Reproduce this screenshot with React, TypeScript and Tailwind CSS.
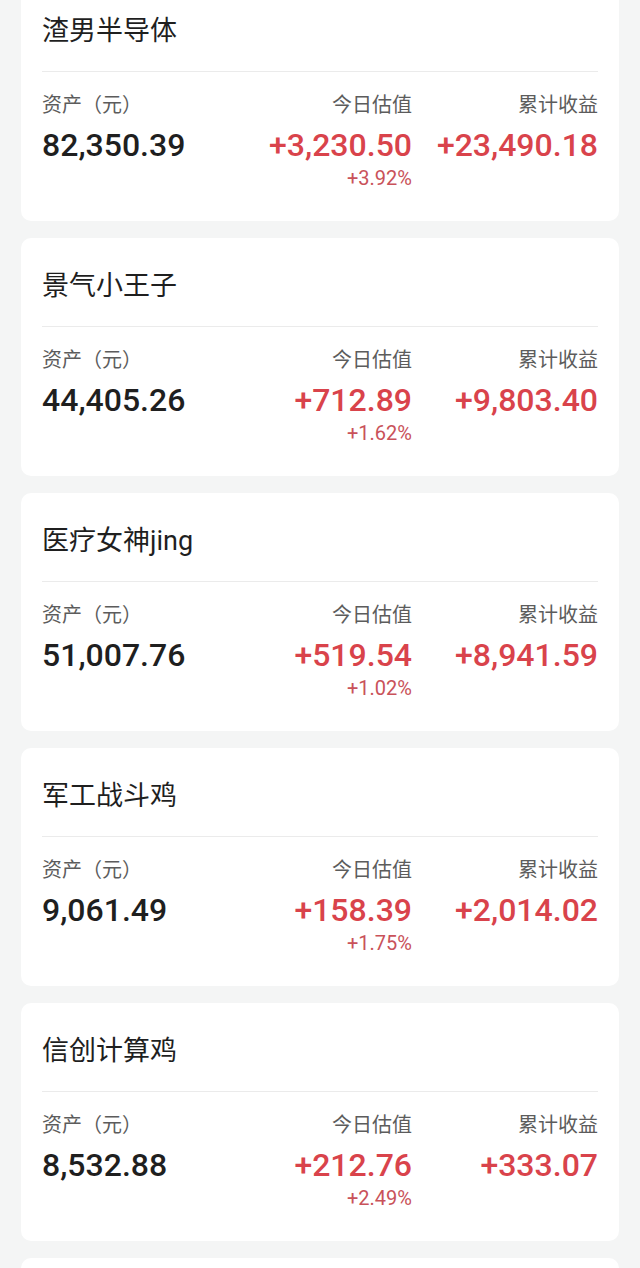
import React from 'react';

interface Fund {
  name: string;
  asset: string;
  today: string;
  todayPct: string;
  total: string;
}

const funds: Fund[] = [
  { name: '渣男半导体', asset: '82,350.39', today: '+3,230.50', todayPct: '+3.92%', total: '+23,490.18' },
  { name: '景气小王子', asset: '44,405.26', today: '+712.89', todayPct: '+1.62%', total: '+9,803.40' },
  { name: '医疗女神jing', asset: '51,007.76', today: '+519.54', todayPct: '+1.02%', total: '+8,941.59' },
  { name: '军工战斗鸡', asset: '9,061.49', today: '+158.39', todayPct: '+1.75%', total: '+2,014.02' },
  { name: '信创计算鸡', asset: '8,532.88', today: '+212.76', todayPct: '+2.49%', total: '+333.07' },
];

const FundCard: React.FC<{ fund: Fund }> = ({ fund }) => (
  <div className="bg-white rounded-[10px] px-[21px] pt-[30px] pb-[31px] h-[238px] shrink-0">
    {/* Title */}
    <div className="text-[27px] leading-[36px] text-[#1f1f1f]">{fund.name}</div>
    <div className="mt-[22px] h-px bg-[#ebebeb]" />

    {/* Numbers */}
    <div className="flex mt-[19px]">
      <div className="flex-1">
        <div className="text-[20px] leading-[28px] text-[#5c5c5c]">资产（元）</div>
        <div className="mt-[6px] text-[32px] leading-[40px] text-[#1f1f1f] font-medium">{fund.asset}</div>
      </div>
      <div className="flex-1 text-right">
        <div className="text-[20px] leading-[28px] text-[#5c5c5c]">今日估值</div>
        <div className="mt-[6px] text-[32px] leading-[40px] text-[#d9434b] font-medium">{fund.today}</div>
        <div className="mt-px text-[20px] leading-[24px] text-[#c9525a]">{fund.todayPct}</div>
      </div>
      <div className="w-[186px] text-right">
        <div className="text-[20px] leading-[28px] text-[#5c5c5c]">累计收益</div>
        <div className="mt-[6px] text-[32px] leading-[40px] text-[#d9434b] font-medium">{fund.total}</div>
      </div>
    </div>
  </div>
);

export default function App() {
  return (
    <div
      className="w-[640px] h-[1268px] overflow-hidden bg-[#f4f5f5]"
      style={{ fontFamily: 'Roboto, "Noto Sans CJK SC", sans-serif' }}
    >
      <div className="-mt-[17px] mx-[21px] flex flex-col gap-[17px]">
        {funds.map((f, i) => (
          <FundCard key={i} fund={f} />
        ))}
        {/* next card, only its top edge is on screen */}
        <div className="bg-white rounded-[10px] h-[238px] shrink-0" />
      </div>
    </div>
  );
}
